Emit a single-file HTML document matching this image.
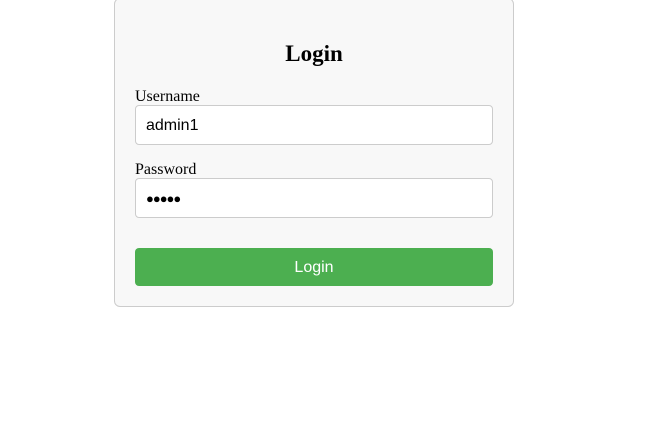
<!DOCTYPE html>
<html><head><style>
body{margin:0;width:667px;height:427px;background:#fff;font-family:"Liberation Serif",serif;position:relative;overflow:hidden}
.card{position:absolute;left:114px;top:-2px;width:398px;height:307px;background:#f8f8f8;border:1px solid #ccc;border-radius:6px}
h2{position:absolute;left:0;width:100%;top:42px;margin:0;text-align:center;font-size:23px;line-height:26px}
.lbl{position:absolute;left:135px;font-size:16px;line-height:18px}
.in{position:absolute;left:135px;width:356px;height:38px;background:#fff;border:1px solid #ccc;border-radius:4px;font-family:"Liberation Sans",sans-serif;font-size:16px;line-height:40px;box-sizing:content-box}
.in span{margin-left:10px}
.btn{position:absolute;left:135px;top:248px;width:358px;height:38px;background:#4caf50;border-radius:4px;color:#fff;text-align:center;line-height:40px;font-family:"Liberation Sans",sans-serif;font-size:16px}
</style></head><body>
<div class="card"><h2>Login</h2></div>
<div class="lbl" style="top:88px">Username</div>
<div class="in" style="top:105px"><span>admin1</span></div>
<div class="lbl" style="top:161px">Password</div>
<div class="in" style="top:178px"><span style="font-size:13px;letter-spacing:-1px">●●●●●</span></div>
<div class="btn">Login</div>
</body></html>
